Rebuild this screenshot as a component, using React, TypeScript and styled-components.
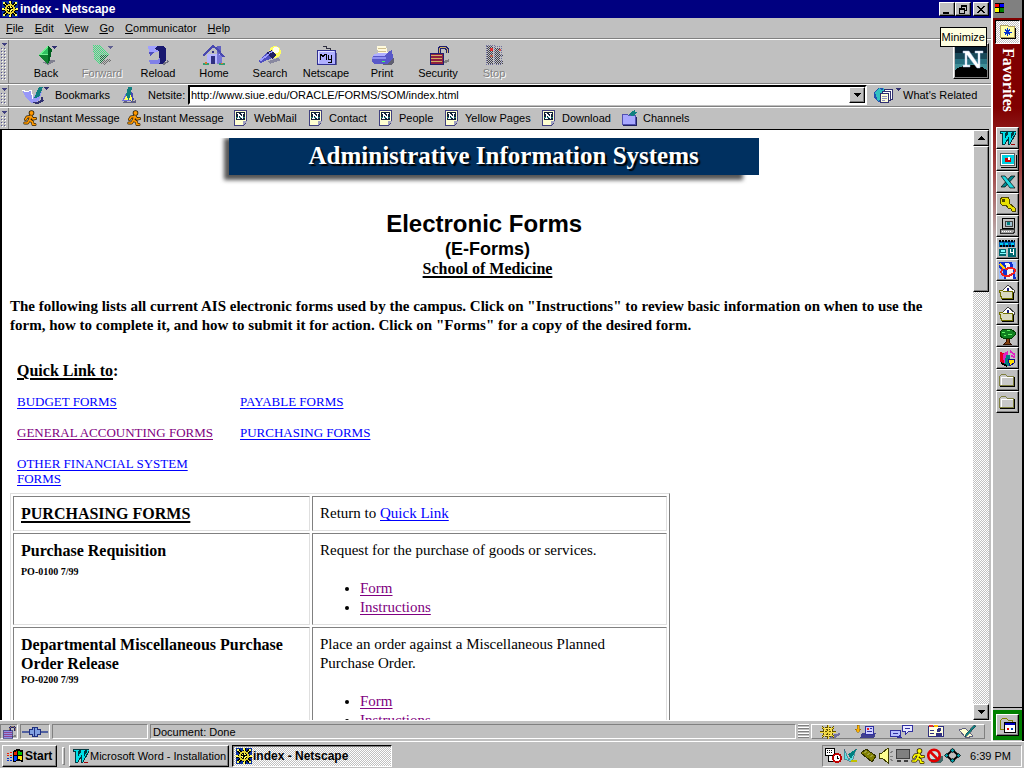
import React from "react";
import styled, { createGlobalStyle, css } from "styled-components";

const GlobalStyle = createGlobalStyle`
  *, *::before, *::after { box-sizing: border-box; }
  body {
    margin: 0;
    background: #c0c0c0;
    color: #000;
    font-family: "Liberation Sans", Arial, sans-serif;
    font-size: 11px;
    line-height: 14px;
  }
  button { font: inherit; color: inherit; margin: 0; padding: 0; border: 0; background: none; }
  svg { display: block; flex: none; shape-rendering: crispEdges; }
`;

const raised = css`
  background-color: #c0c0c0;
  border: 1px solid;
  border-color: #fff #000 #000 #fff;
  box-shadow: inset -1px -1px #808080;
`;
const sunken = css`
  border: 1px solid;
  border-color: #808080 #fff #fff #808080;
`;
const dither = css`
  background: repeating-conic-gradient(#fff 0 25%, #c0c0c0 0 50%) 0 0 / 2px 2px;
`;

const Desktop = styled.div`
  display: flex;
  flex-direction: column;
  height: 100vh;
  overflow: hidden;
`;
const Workspace = styled.div`
  display: flex;
  flex: 1;
  min-height: 0;
`;
const Browser = styled.main`
  position: relative;
  display: flex;
  flex-direction: column;
  flex: 1;
  min-width: 0;
`;

const TitleBar = styled.header`
  display: flex;
  align-items: center;
  height: 18px;
  padding: 0 2px;
  gap: 2px;
  background: #000080;
  color: #fff;
`;
const WindowTitle = styled.h1`
  flex: 1;
  margin: 0;
  font-size: 12px;
  line-height: 16px;
`;
const WindowButton = styled.button<{ $apart?: boolean }>`
  ${raised}
  display: grid;
  place-items: center;
  width: 16px;
  height: 14px;
  margin-left: ${(p) => (p.$apart ? 0 : -2)}px;
`;
const Tooltip = styled.div`
  position: absolute;
  top: 27px;
  right: 4px;
  padding: 2px 1px;
  border: 1px solid #000;
  background: #ffffe1;
  z-index: 2;
`;

const MenuBar = styled.nav`
  display: flex;
  align-items: center;
  height: 20px;
  gap: 11px;
  padding: 0 6px;
`;
const MenuItem = styled.button`
  height: 18px;
`;

const Bar = styled.div<{ $height: number }>`
  display: flex;
  align-items: center;
  height: ${(p) => p.$height}px;
  border-top: 1px solid #808080;
  box-shadow: inset 0 1px #fff;
`;
const Grip = styled.button`
  display: flex;
  flex-direction: column;
  align-items: center;
  align-self: stretch;
  width: 9px;
  padding-top: 3px;
  border-right: 1px solid #808080;
  margin-top: 1px;
  &::after {
    content: "";
    flex: 1;
    width: 6px;
    margin: 2px 0;
    background:
      conic-gradient(from 270deg at 1px 1px, #505090 90deg, transparent 0) 0 0 / 3px 3px,
      conic-gradient(from 270deg at 1px 1px, #fff 90deg, transparent 0) 1px 1px / 3px 3px;
  }
`;
const ToolButtons = styled.div`
  display: flex;
  flex: 1;
  padding-left: 9px;
`;
const ToolButton = styled.button<{ $off?: boolean }>`
  display: flex;
  flex-direction: column;
  align-items: center;
  width: 56px;
  gap: 1px;
  padding-top: 2px;
  color: ${(p) => (p.$off ? "#808080" : "#000")};
  text-shadow: ${(p) => (p.$off ? "1px 1px #fff" : "none")};
`;
const LogoButton = styled.button`
  ${raised}
  display: grid;
  place-items: center;
  width: 36px;
  height: 36px;
  margin-right: 2px;
`;
const BookmarkMenu = styled.button`
  display: flex;
  align-items: center;
  gap: 6px;
  width: 112px;
  padding-left: 13px;
`;
const SiteLabel = styled.label`
  width: 40px;
  margin-left: 12px;
`;
const Combo = styled.div`
  display: flex;
  flex: 1;
  height: 20px;
  border: 2px solid;
  border-color: #000 #fff #fff #000;
  background: #fff;
`;
const Address = styled.input`
  flex: 1;
  min-width: 0;
  border: 0;
  outline: 0;
  padding: 0 1px;
  font: inherit;
`;
const SquareButton = styled.button`
  ${raised}
  display: grid;
  place-items: center;
  width: 16px;
  height: 16px;
  flex: none;
`;
const Related = styled.button`
  display: flex;
  align-items: center;
  width: 124px;
  padding-left: 6px;
  gap: 2px;
`;
const PersonalLinks = styled.div`
  display: flex;
  padding-left: 14px;
`;
const PersonalLink = styled.button<{ $w: number; $tight?: boolean }>`
  display: flex;
  align-items: center;
  width: ${(p) => p.$w}px;
  gap: ${(p) => (p.$tight ? 2 : 6)}px;
  white-space: nowrap;
`;

const Viewport = styled.section`
  display: flex;
  flex: 1;
  min-height: 0;
  border: solid #000;
  border-width: 1px 0 0 2px;
  margin-right: 2px;
`;
const Page = styled.article`
  flex: 1;
  min-width: 0;
  overflow: hidden;
  padding: 8px;
  background: #fff;
  font: 15px/19px "Liberation Serif", "Times New Roman", serif;
`;
const ScrollBar = styled.div`
  ${dither}
  display: flex;
  flex-direction: column;
  width: 16px;
`;
const Thumb = styled.div`
  ${raised}
  height: 146px;
`;
const Spacer = styled.div`
  flex: 1;
`;

const BannerWrap = styled.div`
  display: flex;
  justify-content: center;
  padding-left: 12px;
`;
const Banner = styled.div`
  position: relative;
  width: 530px;
  height: 37px;
  color: #fff;
  padding-left: 80px;
  font-size: 25px;
  line-height: 36px;
  font-weight: bold;
  text-shadow: 2px 2px 1px #000;
  white-space: nowrap;
  isolation: isolate;
  &::before {
    content: "";
    position: absolute;
    inset: 0 16px -5px -5px;
    background: #555;
    filter: blur(2px);
    z-index: -2;
    clip-path: inset(0 -8px -8px -8px);
  }
  &::after {
    content: "";
    position: absolute;
    inset: 0;
    background: #003060;
    z-index: -1;
  }
`;
const Heading = styled.h2`
  margin: 35px 0 0;
  text-align: center;
  font: bold 24px/28px "Liberation Sans", Arial, sans-serif;
`;
const SubHeading = styled.h3`
  margin: 2px 0 0;
  text-align: center;
  font: bold 18px/19px "Liberation Sans", Arial, sans-serif;
`;
const School = styled.p`
  margin: 0;
  text-align: center;
  font-size: 16px;
  font-weight: bold;
  text-decoration: underline 2px;
  text-underline-offset: 2px;
`;
const Intro = styled.p`
  margin: 19px 16px 26px 0;
  font-weight: bold;
`;
const QuickTitle = styled.h4`
  margin: 0 0 14px 7px;
  font-size: 16px;
  span { text-decoration: underline 2px; text-underline-offset: 2px; }
`;
const QuickLinks = styled.div`
  display: grid;
  grid-template-columns: 200px 200px;
  column-gap: 23px;
  row-gap: 16px;
  margin: 0 0 7px 7px;
  font-size: 13px;
  line-height: 15px;
`;
const Link = styled.a<{ $seen?: boolean }>`
  color: ${(p) => (p.$seen ? "#800080" : "#0000ff")};
  text-underline-offset: 2px;
  text-decoration-thickness: 1px;
`;
const FormTable = styled.table`
  width: 660px;
  table-layout: fixed;
  border: 1px solid;
  border-color: #dfdfdf #808080 #808080 #dfdfdf;
  border-spacing: 2px;
  td, th {
    border: 1px solid;
    border-color: #808080 #dfdfdf #dfdfdf #808080;
    padding: 7px;
    vertical-align: top;
    text-align: left;
  }
  th { font-size: 16px; }
`;
const NameCol = styled.col`
  width: 297px;
`;
const SectionName = styled.span`
  text-decoration: underline 2px;
  text-underline-offset: 2px;
`;
const FormCode = styled.div<{ $spaced?: boolean }>`
  margin-top: ${(p) => (p.$spaced ? 5 : 0)}px;
  font-size: 10px;
  line-height: 13px;
`;
const LinkList = styled.ul`
  margin: 19px 0 0;
  padding-left: 40px;
`;

const StatusBar = styled.footer`
  display: flex;
  align-items: stretch;
  height: 21px;
  padding: 3px 6px 2px 0;
  gap: 2px;
  border-top: 1px solid #fff;
`;
const StatusCell = styled.div<{ $w?: number }>`
  ${sunken}
  display: flex;
  align-items: center;
  ${(p) => (p.$w ? `width: ${p.$w}px;` : "flex: 1; padding-left: 2px;")}
`;
const StatusGrip = styled.div`
  width: 11px;
  background: repeating-linear-gradient(#fff 0 1px, #808080 1px 2px, #c0c0c0 2px 3px);
`;
const ComponentBar = styled.div`
  ${raised}
  border-color: #fff #808080 #808080 #fff;
  box-shadow: none;
  display: flex;
  align-items: center;
  justify-content: space-around;
  width: 174px;
`;
const IconButton = styled.button`
  display: grid;
  place-items: center;
`;

const Shortcuts = styled.aside`
  display: flex;
  flex-direction: column;
  width: 33px;
  border-left: 2px solid #fff;
  border-right: 2px solid #000;
`;
const ShortcutHead = styled.div`
  height: 18px;
  padding: 3px 2px;
  background: #808080;
`;
const ShortcutStrip = styled.div`
  display: flex;
  flex-direction: column;
  align-items: center;
  flex: 1;
  padding-top: 2px;
  background: linear-gradient(#800000 0 90px, #a04040 150px, #c0c0c0 230px);
  border-bottom: 1px solid #000;
`;
const FavButton = styled.button`
  ${dither}
  display: grid;
  place-items: center;
  width: 25px;
  height: 24px;
  border: 1px solid;
  border-color: #000 #fff #fff #000;
`;
const FavLabel = styled.div`
  height: 83px;
  padding-top: 4px;
  writing-mode: vertical-rl;
  color: #fff;
  font: bold 16px/18px "Liberation Serif", serif;
`;
const Shortcut = styled.button`
  ${raised}
  display: grid;
  place-items: center;
  width: 23px;
  height: 22px;
`;
const OfficeBox = styled.div`
  display: grid;
  place-items: center;
  height: 30px;
  margin-top: 2px;
  margin-bottom: 1px;
  background: #008000;
`;

const TaskBar = styled.footer`
  display: flex;
  align-items: center;
  height: 27px;
  padding: 1px 2px 0;
  border-top: 1px solid #fff;
  font-size: 11px;
`;
const StartButton = styled.button`
  ${raised}
  display: flex;
  align-items: center;
  gap: 1px;
  width: 55px;
  height: 22px;
  padding-left: 3px;
  font-size: 12px;
  font-weight: bold;
`;
const Divider = styled.div`
  ${raised}
  border-color: #fff #808080 #808080 #fff;
  box-shadow: none;
  width: 3px;
  height: 18px;
  margin: 0 4px 0 5px;
`;
const TaskButton = styled.button<{ $active?: boolean }>`
  ${raised}
  display: flex;
  align-items: center;
  gap: 1px;
  width: 160px;
  height: 22px;
  margin-right: 3px;
  padding-left: 3px;
  white-space: nowrap;
  ${(p) =>
    p.$active &&
    css`
      ${dither}
      border-color: #000 #fff #fff #000;
      box-shadow: inset 1px 1px #808080;
      font-size: 12px;
      font-weight: bold;
    `}
`;
const Tray = styled.div`
  ${sunken}
  display: flex;
  align-items: center;
  gap: 1px;
  width: 200px;
  height: 22px;
  padding: 0 10px 0 2px;
`;
const Clock = styled.time`
  flex: 1;
  text-align: right;
  font-size: 11px;
`;

const Arrow = ({ up }: { up?: boolean }) => (
  <svg width="7" height="4" viewBox="0 0 7 4">
    <path d={up ? "M3 0h1v1h1v1h1v1h1v1H0V3h1V2h1V1h1z" : "M0 0h7v1H6v1H5v1H4v1H3V3H2V2H1V1H0z"} />
  </svg>
);
const GripArrow = () => (
  <svg width="6" height="3" viewBox="0 0 6 3"><path d="M0 0h6L3 3z" fill="#404080" /></svg>
);
const Wheel = ({ size = 16 }: { size?: number }) => (
  <svg width={size} height={size} viewBox="0 0 16 16">
    <rect width="16" height="16" fill="#0830a0" />
    <path d="M8 0v16M0 8h16M2 2l12 12M14 2L2 14" stroke="#000" strokeWidth="3" />
    <circle cx="8" cy="8" r="4" fill="none" stroke="#000" strokeWidth="3" />
    <path d="M8 0v16M0 8h16M2 2l12 12M14 2L2 14" stroke="#ffff60" strokeWidth="1" />
    <circle cx="8" cy="8" r="4" fill="none" stroke="#e0d030" strokeWidth="2" />
    <path d="M7 0h2v2H7zM7 14h2v2H7zM0 7h2v2H0zM14 7h2v2h-2zM1 1h2v2H1zM13 1h2v2h-2zM1 13h2v2H1zM13 13h2v2h-2z" fill="#ffff60" />
    <rect x="7" y="7" width="2" height="2" fill="#000" />
  </svg>
);
const Back = () => (
  <svg width="24" height="20" viewBox="0 0 24 20">
    <path d="M8 17l11-2 3 1-8 4z" fill="#808090" />
    <path d="M4 10l10-10v10z" fill="#70f090" /><path d="M4 10h10v9z" fill="#108030" />
    <path d="M14 0l4 5-2 10-2 4z" fill="#006020" /><path d="M7 9l7-6v6z" fill="#30c060" />
    <path d="M18 1h5l-2.500 3z" fill="#303070" />
  </svg>
);
const Forward = () => (
  <svg width="24" height="20" viewBox="0 0 24 20">
    <defs><pattern id="fw" width="2" height="2" patternUnits="userSpaceOnUse"><path d="M0 0h1v1H0zM1 1h1v1H1z" fill="#c0c0c0" /></pattern></defs>
    <path d="M8 17l11-3 3 1-8 5z" fill="#707070" />
    <path d="M3 0h6l11 10-10 9-6-4z" fill="#40e080" /><path d="M20 10l-10 9V10z" fill="#108040" />
    <rect width="24" height="20" fill="url(#fw)" />
    <path d="M18 1h5l-2.500 3z" fill="#606090" />
  </svg>
);
const Reload = () => (
  <svg width="24" height="20" viewBox="0 0 24 20">
    <path d="M14 17h7l1-3 1 3-5 3z" fill="#707080" />
    <path d="M11 1h6l3 3v11l-4 4H8l5-4V6l-4-2z" fill="#181870" />
    <path d="M2 1h10L8 4l5 2-5 2-5-1z" fill="#a0a0ff" /><path d="M3 7h5L4 11z" fill="#5050c0" />
    <path d="M3 15h8l3-2v4l-2 2H4z" fill="#8080e8" />
  </svg>
);
const Home = () => (
  <svg width="24" height="20" viewBox="0 0 24 20">
    <path d="M15 1h4v8h-4z" fill="#6060c0" /><path d="M5 9h14v9H5z" fill="#b8b8ff" />
    <path d="M15 8l5 3v8h-5z" fill="#7878d8" />
    <path d="M1 11L11 1l4 3 7 8" fill="none" stroke="#4848b0" strokeWidth="2" />
    <path d="M9 11h4v8H9z" fill="#303080" /><circle cx="11" cy="7" r="1.500" fill="#303080" />
    <path d="M1 18h6v2H1zM17 18h6v2h-6z" fill="#30a070" /><path d="M3 17h2v2H3zM19 18h2v1h-2z" fill="#e07030" />
  </svg>
);
const Search = () => (
  <svg width="24" height="20" viewBox="0 0 24 20">
    <path d="M10 16l10-3 3 2-11 4z" fill="#8888a0" />
    <circle cx="17" cy="7" r="6" fill="#ffff60" /><circle cx="18" cy="5" r="3" fill="#fffff0" />
    <path d="M0 16l9-8 5 5-11 5z" fill="#5050c0" /><path d="M8 8l6-3 4 5-4 4z" fill="#202060" />
    <path d="M1 15l9-6 1 1-8 6zM10 8l4-2 1 1-4 2z" fill="#a0a0ff" />
  </svg>
);
const MyNetscape = () => (
  <svg width="24" height="20" viewBox="0 0 24 20">
    <path d="M22 8v12H6" stroke="#606080" fill="none" /><path d="M9 1h3v2h4v2" fill="none" stroke="#303040" />
    <rect x="3" y="5" width="18" height="14" fill="#b0b0ff" stroke="#303090" />
    <path d="M4 6h16v1H5v11H4z" fill="#e0e0ff" />
    <path d="M6 15V9h1l2 3 2-3h1v6M14 10v4h3v-4M17 13v4h-3" fill="none" stroke="#000" />
  </svg>
);
const Printer = () => (
  <svg width="24" height="20" viewBox="0 0 24 20">
    <path d="M18 17l6-4v4l-3 3h-9z" fill="#606070" />
    <path d="M7 1h9l2 8H8z" fill="#fffadc" /><path d="M8 3h8M8 6h8" stroke="#d0c090" />
    <path d="M3 10l5-2h9l5-3 1 8-5 6H4l-2-3z" fill="#5858c8" />
    <path d="M3 10l5-2h9l-2 3H3z" fill="#b0b0ff" /><path d="M2 12h14v2H2z" fill="#9090f0" />
    <path d="M12 16h3v1h-3z" fill="#40ff60" />
  </svg>
);
const Security = ({ small }: { small?: boolean }) => (
  <svg width={small ? 16 : 24} height={small ? 14 : 20} viewBox="0 0 24 20">
    <path d="M17 16l6-2v3l-7 2z" fill="#808080" />
    <path d="M13 8V4l2-2h4l2 2v4" fill="none" stroke="#202070" strokeWidth="3" />
    <path d="M13 8V4l2-2h4l2 2v4" fill="none" stroke="#d0b060" />
    <rect x="4" y="8" width="13" height="11" fill={small ? "#9090e8" : "#902040"} stroke="#202070" />
    <path d="M5 10h11M5 13h11M5 16h11" stroke={small ? "#902060" : "#d0b060"} />
  </svg>
);
const Stop = () => (
  <svg width="24" height="20" viewBox="0 0 24 20">
    <defs><pattern id="shade" width="2" height="2" patternUnits="userSpaceOnUse"><path d="M0 0h1v1H0zM1 1h1v1H1z" fill="#404050" /></pattern></defs>
    <path d="M5 1h6v18H5zM13 3h7v3h-2v3h3v3h-3v3h3v4h-8z" fill="url(#shade)" />
    <rect x="4" y="0" width="8" height="19" fill="none" stroke="#7070a0" strokeDasharray="1 1" />
    <path d="M13 1h6v18h-6" fill="none" stroke="#7070a0" strokeDasharray="1 1" />
    <rect x="8" y="3" width="3" height="3" fill="#e03030" /><rect x="8" y="10" width="3" height="2" fill="#c06050" />
    <rect x="17" y="4" width="2" height="2" fill="#d05050" />
  </svg>
);
const Bookmarks = () => (
  <svg width="27" height="18" viewBox="0 0 27 18">
    <path d="M0 4l5 2 4-2 2 8 5-8 4 2-3 9-8 2-5-5z" fill="#9898f8" />
    <path d="M0 4l5 2 4-2 2 9" fill="none" stroke="#fff" /><path d="M12 12l5-11h4l-4 10z" fill="#108080" />
    <path d="M9 17l9-2 2-5 2 5-6 3z" fill="#303070" /><path d="M22 1h5l-2.500 3z" fill="#303070" />
  </svg>
);
const Quickfile = () => (
  <svg width="15" height="17" viewBox="0 0 15 17">
    <path d="M3 14l6 1 6-2v3H2z" fill="#606080" />
    <path d="M1 14L5 6l4 8z" fill="#7070e0" /><path d="M7 0h4l-2 13H4z" fill="#108080" />
    <path d="M11 4l2 9-3 2-2-3z" fill="#4848b0" /><path d="M8 13l2-7 1 8zM3 13l3-5 1 5z" fill="#ffff60" />
  </svg>
);
const RelatedIcon = () => (
  <svg width="28" height="17" viewBox="0 0 28 17">
    <circle cx="8" cy="8" r="7" fill="#2050b0" /><path d="M2 5l4-4 5 3-4 3 1 4-3 3zM10 1l4 3-3 2z" fill="#30c0c0" />
    <path d="M11.500 2.500h8v10h-8z" fill="#fff" stroke="#303070" /><path d="M9.500 4.500h8v9h-8z" fill="#fff" stroke="#303070" />
    <path d="M7.500 6.500h8v9h-8z" fill="#ffffd8" stroke="#303070" />
    <path d="M9 9h5M9 11h5M9 13h3" stroke="#9090c0" /><path d="M23 1h5l-2.500 3z" fill="#303070" />
  </svg>
);
const Runner = ({ color = "#ff9800" }: { color?: string }) => (
  <svg width="14" height="16" viewBox="0 0 14 16">
    <g shapeRendering="geometricPrecision" strokeLinejoin="round" strokeLinecap="round">
      <path d="M8 6L6.500 10l3 2 .5 2.500h2M6.500 10L4.500 13H1.800M2.500 9.500L4 7l4-.5 2 2.500 2.500-.5" fill="none" stroke="#302000" strokeWidth="3" />
      <circle cx="8.500" cy="3" r="2.800" fill="#302000" />
      <circle cx="8.500" cy="3" r="2" fill={color} />
      <path d="M8 6L6.500 10l3 2 .5 2.500h2M6.500 10L4.500 13H1.800M2.500 9.500L4 7l4-.5 2 2.500 2.500-.5" fill="none" stroke={color} strokeWidth="1.700" />
    </g>
  </svg>
);
const PageIcon = () => (
  <svg width="14" height="16" viewBox="0 0 14 16">
    <path d="M.5.500h12v11l-3 4h-9z" fill="#ffffd0" stroke="#404080" />
    <rect x="2" y="2" width="9" height="8" fill="#102038" /><rect x="2" y="7" width="9" height="1" fill="#208080" />
    <path d="M3 3h2v1h1v1h1v1h1V4H7V3h3v1H9v5H8V8H7V7H6V6H5v2h1v1H3V8h1V4H3z" fill="#fff" />
    <path d="M9 15v-4h4z" fill="#a0a0c0" />
  </svg>
);
const ChannelFolder = () => (
  <svg width="16" height="16" viewBox="0 0 16 16">
    <path d="M1 4h5l1 1h7v9H1z" fill="#a8a8ff" stroke="#5050b0" /><path d="M2 15.500h13V7" fill="none" stroke="#202060" />
    <path d="M7 5l3-3 4-2v2h2l-4 4z" fill="#108080" />
  </svg>
);
const NetscapeLogo = () => (
  <svg width="32" height="32" viewBox="0 0 32 32">
    <rect width="32" height="32" fill="#082030" /><rect y="8" width="32" height="6" fill="#184858" /><rect y="14" width="32" height="5" fill="#287080" /><rect y="19" width="32" height="7" fill="#409098" />
    <path d="M0 25l5-3 7-2h8l7 2 5 3v7H0z" fill="#000" />
    <g shapeRendering="geometricPrecision">
      <path d="M8 6h6l9 13V8h-3V6h8v2h-3v15h-3L12 10v10h3v2H8v-2h2V8H8z" fill="#fff" stroke="#a0b8e0" strokeWidth=".5" />
    </g>
  </svg>
);
const WordIcon = () => (
  <svg width="16" height="16" viewBox="0 0 16 16">
    <path d="M0 1h6v2H5v5l3-5H7V1h5v2h-1v5l3-5h-1V1h3v2l-6 11H8V9l-3 5H2V3H0z" fill="#00e0e8" stroke="#003840" />
    <path d="M11 14h4" stroke="#a00000" />
  </svg>
);
const MonitorIcon = () => (
  <svg width="18" height="16" viewBox="0 0 18 16">
    <path d="M1.500 1.500h14v12h-14z" fill="#fff" stroke="#606060" /><rect x="3" y="3" width="12" height="9" fill="#00d0e0" />
    <path d="M6 6h6v4H6z" fill="#d00000" /><path d="M9 5h2v3H9z" fill="#fff" /><path d="M2 15h15V3" fill="none" stroke="#000" />
  </svg>
);
const ExcelIcon = () => (
  <svg width="16" height="16" viewBox="0 0 16 16">
    <g shapeRendering="geometricPrecision">
      <path d="M11 2h4L5 13H1z" fill="#008890" stroke="#000" strokeWidth=".7" /><path d="M1 2h4l10 12h-5z" fill="#20d8e0" stroke="#000" strokeWidth=".7" />
    </g>
  </svg>
);
const KeyIcon = () => (
  <svg width="17" height="16" viewBox="0 0 17 16">
    <path d="M1 3l3-2h5l2 4-1 2 6 5v3h-3l-1-2-3-1-2-3H3L1 7z" fill="#e8e000" stroke="#504800" />
    <rect x="3" y="3" width="3" height="3" fill="#504800" />
  </svg>
);
const ComputerIcon = () => (
  <svg width="17" height="16" viewBox="0 0 17 16">
    <path d="M3.500.500h12v10h-12z" fill="#c0c0c0" stroke="#000" /><path d="M6 3h7v5H6z" fill="#a0c0d0" stroke="#404040" />
    <path d="M8 4h3v3H8z" fill="#008080" />
    <path d="M1.500 11.500h12l2-1v4l-2 1h-12z" fill="#a0a0a0" stroke="#303030" /><path d="M3 13h9" stroke="#fff" strokeDasharray="1 1" />
  </svg>
);
const FilmIcon = () => (
  <svg width="17" height="17" viewBox="0 0 17 17">
    <rect width="16" height="6" y="1" fill="#0060b0" /><path d="M0 1h16M1 6h14" stroke="#000" strokeDasharray="2 1" strokeWidth="2" />
    <path d="M1 3h3v2H1zM6 3h3v2H6zM12 3h3v2h-3z" fill="#00d0f0" />
    <path d="M0 9h7v7H0zM9 8h8v9H9z" fill="#006870" /><path d="M2 10h4v2H2zM1 13h6v1H1z" fill="#80ffff" />
    <path d="M11 9h1v3h2V9h1v6h-1v-2h-3z" fill="#fff" />
  </svg>
);
const PaintIcon = () => (
  <svg width="17" height="17" viewBox="0 0 17 17">
    <rect width="17" height="17" fill="#1030d0" /><path d="M0 5l4 5 1 7H0zM13 0h4v17z" fill="#a0c0ff" />
    <path d="M6 1h4l2 5 2 2v9H7l1-7z" fill="#f0f0f0" />
    <path d="M4 7c-4 3 0 8 5 7s9-5 6-7-7-1-9 1" fill="none" stroke="#f02020" strokeWidth="2" />
    <path d="M1 2l5 5" stroke="#ffd000" strokeWidth="2" />
  </svg>
);
const OpenFolder = () => (
  <svg width="17" height="16" viewBox="0 0 17 16">
    <path d="M3 7l6-6 7 6-2 3H3z" fill="#fff" stroke="#404040" /><path d="M8 4h2v3H8z" fill="#202080" />
    <path d="M.5 6.500h3l1 1h9v7h-11z" fill="#d8d8c0" stroke="#707000" /><path d="M3 15.500h11V9" fill="none" stroke="#000" />
  </svg>
);
const TreeIcon = () => (
  <svg width="17" height="17" viewBox="0 0 17 17">
    <path d="M5 16l2-2V9h3v5l2 2z" fill="#804010" stroke="#301000" /><path d="M1 4l3-3h8l4 3v3l-3 3H4L1 8z" fill="#108020" stroke="#004000" />
    <path d="M3 4h3v1H3zM8 2h3v1H8zM9 6h4v1H9zM5 7h2v1H5z" fill="#60f060" />
  </svg>
);
const BooksIcon = () => (
  <svg width="17" height="17" viewBox="0 0 17 17">
    <path d="M1 2l4 1v12l-4-3z" fill="#e00020" /><path d="M4 4l5-3v11l-4 3z" fill="#e020c0" /><path d="M7 5h4v11H5z" fill="#008080" />
    <path d="M9 9h6v4l-4 3z" fill="#ffe000" stroke="#101080" /><path d="M11 1l5 4M12 6l4 1" stroke="#e020c0" strokeWidth="2" /><path d="M2 13l6 3" stroke="#000" strokeWidth="2" />
  </svg>
);
const Folder = () => (
  <svg width="17" height="15" viewBox="0 0 17 15">
    <path d="M.5 3.500l2-2h4l2 2h6v9h-14z" fill="#c8c8c8" stroke="#808040" /><path d="M1 13.500h14.500V4" fill="none" stroke="#000" /><path d="M2 12V4h12" fill="none" stroke="#fff" />
  </svg>
);
const FavIcon = () => (
  <svg width="17" height="16" viewBox="0 0 17 16">
    <path d="M1 2l2-1h5l1 1h6v11H1z" fill="#ffffa8" stroke="#b0a060" /><path d="M2 14.500h14V4" fill="none" stroke="#000" />
    <path d="M8.500 4v8M4.500 8h8M6 5.500l5 5M11 5.500l-5 5" stroke="#0030d0" />
  </svg>
);
const OfficeIcon = () => (
  <svg width="18" height="17" viewBox="0 0 18 17">
    <path d="M1.500 3.500l2-2h4l2 2h4v9h-12z" fill="#c0c0c0" stroke="#808000" /><rect x="5.500" y="5.500" width="11" height="10" fill="#fff" stroke="#000" />
    <rect x="6" y="6" width="10" height="2" fill="#0000c0" /><path d="M8 11h2v2H8z" fill="#e00000" /><path d="M12 11h2v2h-2z" fill="#0040c0" />
  </svg>
);
const WindowsFlag = () => (
  <svg width="18" height="16" viewBox="0 0 18 16">
    <path d="M7 3l4-2 6 1v12l-5-1-5 1z" fill="#000" />
    <path d="M8 4l3-1v4H8z" fill="#f02000" /><path d="M12 3l4 1v3h-4z" fill="#00c000" /><path d="M8 8h3v4l-3 1z" fill="#0040ff" /><path d="M12 8h4v4l-4-1z" fill="#ffe000" />
    <path d="M1 5h2M4 4h2M1 7h2M4 7h2" stroke="#f02000" /><path d="M1 10h2M4 9h2M1 12h2M4 12h2" stroke="#0030d0" />
  </svg>
);
const Connect = () => (
  <svg width="28" height="12" viewBox="0 0 28 12">
    <path d="M1 5h26v2H1z" fill="#5060a0" /><path d="M8.500 3.500h3v-2h5v2h3v5h-3v2h-5v-2h-3z" fill="#80a0e0" stroke="#203080" /><path d="M13.500 1v10" stroke="#203080" />
  </svg>
);
const HelmIcon = () => (
  <svg width="22" height="14" viewBox="0 0 22 14">
    <path d="M13 10l8-2v2l-5 3h-5z" fill="#7070a0" />
    <path d="M9 0v14M1 7h16M3 2l12 10M15 2L3 12" stroke="#605000" strokeWidth="2" />
    <circle cx="9" cy="7" r="4" fill="none" stroke="#605000" strokeWidth="3" />
    <circle cx="9" cy="7" r="4" fill="none" stroke="#ffe870" />
    <path d="M9 0v14M1 7h16M3 2l12 10M15 2L3 12" stroke="#f0d840" />
  </svg>
);
const InboxIcon = () => (
  <svg width="22" height="14" viewBox="0 0 22 14">
    <path d="M3 0h2v4h2L4 8 1 4h2z" fill="#ffb000" stroke="#806000" strokeWidth=".5" /><path d="M8 8h14l-2 5H6z" fill="#404090" />
    <path d="M11 1h8v8h-8z" fill="#d0d0ff" stroke="#3030a0" /><path d="M13 3h2v2h-2z" fill="#f02020" /><path d="M16 3h2M13 6h5" stroke="#3030a0" />
  </svg>
);
const NewsIcon = () => (
  <svg width="24" height="14" viewBox="0 0 24 14">
    <path d="M.5 5.500h10v6h-10z" fill="#b8c0ff" stroke="#3030a0" /><path d="M9 10l3 3H6z" fill="#3030a0" />
    <path d="M12.500.500h10v6h-4l-3 3v-3h-3z" fill="#e8e8ff" stroke="#3030a0" /><path d="M15 3h5M3 8h5" stroke="#3030a0" />
  </svg>
);
const CardIcon = () => (
  <svg width="17" height="13" viewBox="0 0 17 13">
    <path d="M.5 1.500h15v10H.5z" fill="#ffffe0" stroke="#303080" /><path d="M1 0h4v2H1z" fill="#e03030" /><path d="M6 0h4v2H6z" fill="#ffc000" />
    <circle cx="11" cy="5" r="2" fill="#303080" /><path d="M8 11V8h6v3zM2 5h4v1H2zM2 8h4v1H2z" fill="#303080" />
  </svg>
);
const ComposeIcon = () => (
  <svg width="19" height="14" viewBox="0 0 19 14">
    <path d="M1 5l6-2 8 8-7 2z" fill="#ffffd0" stroke="#606080" /><path d="M16 0l2 1-9 10-2 1 1-3z" fill="#108080" stroke="#203040" strokeWidth=".5" />
  </svg>
);
const TrayIcons = () => (
  <>
    <svg width="17" height="17" viewBox="0 0 17 17"><path d="M.5 1.500h9v7h-9z" fill="#fff" stroke="#000" /><path d="M2 3h6M2 5h6" stroke="#000" strokeDasharray="1 1" /><path d="M3.500 8.500h11v6h-11z" fill="#fff" stroke="#000" /><circle cx="12" cy="11" r="4" fill="#fff" stroke="#c00000" strokeWidth="2" /><path d="M12 9v2h2" fill="none" stroke="#000" /></svg>
    <svg width="16" height="17" viewBox="0 0 16 17"><path d="M1 2l5 11 7-11-4 13-8-3z" fill="#60e0e0" stroke="#204060" strokeWidth=".5" /><path d="M5 7l3 5 6-10z" fill="#008080" /><path d="M8 13h6v2H8z" fill="#c0c000" /></svg>
    <svg width="17" height="16" viewBox="0 0 17 16"><path d="M1 5l5-4 10 7-4 6z" fill="#808000" stroke="#303000" /><path d="M4 5l3-2M7 7l3-2M10 9l3-2" stroke="#a0a040" /></svg>
    <svg width="16" height="16" viewBox="0 0 16 16"><path d="M1 5h3l6-5v15l-6-5H1z" fill="#ffff90" stroke="#404000" /><path d="M12 5l3-2M12 8h3M12 11l3 2" stroke="#808080" /></svg>
    <svg width="15" height="15" viewBox="0 0 15 15"><path d="M1 1h13v9H1z" fill="#808080" stroke="#404040" /><path d="M2 12h4v2H2zM9 12h4v2H9z" fill="#404040" /></svg>
    <Runner color="#ffff00" />
    <svg width="17" height="16" viewBox="0 0 17 16">
      <path d="M5 8h12v5l-3 2H5z" fill="#406868" />
      <g shapeRendering="geometricPrecision"><path d="M4 4h8v7H4z" fill="#d0e0e0" /><circle cx="8" cy="7.500" r="5.800" fill="none" stroke="#e00000" strokeWidth="2.500" /><path d="M4 3.500l8 8" stroke="#e00000" strokeWidth="2.500" /></g>
    </svg>
    <svg width="17" height="16" viewBox="0 0 17 16"><g shapeRendering="geometricPrecision"><path d="M8.500 2l6 5.500-6 5.500-6-5.500z" fill="none" stroke="#000" strokeWidth="2" /><path d="M8.500.5L11 2.500l-2.500 2L6 2.500zM2.500 5.500L5 7.500l-2.500 2-2-2zM14.500 5.500l2 2-2 2-2.500-2zM8.500 10.500l2.500 2-2.500 2-2.500-2z" fill="#00a0a8" stroke="#000" strokeWidth=".8" /></g></svg>
  </>
);

const menus = ["File", "Edit", "View", "Go", "Communicator", "Help"];
const tools = [
  { label: "Back", icon: <Back /> },
  { label: "Forward", icon: <Forward />, off: true },
  { label: "Reload", icon: <Reload /> },
  { label: "Home", icon: <Home /> },
  { label: "Search", icon: <Search /> },
  { label: "Netscape", icon: <MyNetscape /> },
  { label: "Print", icon: <Printer /> },
  { label: "Security", icon: <Security /> },
  { label: "Stop", icon: <Stop />, off: true },
];
const personal = [
  { label: "Instant Message", icon: <Runner />, w: 104, tight: true },
  { label: "Instant Message", icon: <Runner />, w: 107, tight: true },
  { label: "WebMail", icon: <PageIcon />, w: 75 },
  { label: "Contact", icon: <PageIcon />, w: 70 },
  { label: "People", icon: <PageIcon />, w: 66 },
  { label: "Yellow Pages", icon: <PageIcon />, w: 97 },
  { label: "Download", icon: <PageIcon />, w: 79 },
  { label: "Channels", icon: <ChannelFolder />, w: 80 },
];
const shortcuts = [
  { name: "Word", icon: <WordIcon /> },
  { name: "PowerPoint", icon: <MonitorIcon /> },
  { name: "Excel", icon: <ExcelIcon /> },
  { name: "Access", icon: <KeyIcon /> },
  { name: "Computer", icon: <ComputerIcon /> },
  { name: "Media", icon: <FilmIcon /> },
  { name: "Paint", icon: <PaintIcon /> },
  { name: "Documents", icon: <OpenFolder /> },
  { name: "Projects", icon: <OpenFolder /> },
  { name: "Family tree", icon: <TreeIcon /> },
  { name: "Library", icon: <BooksIcon /> },
  { name: "Folder one", icon: <Folder /> },
  { name: "Folder two", icon: <Folder /> },
];
const quickLinks = [
  { label: "BUDGET FORMS" },
  { label: "PAYABLE FORMS" },
  { label: "GENERAL ACCOUNTING FORMS", seen: true },
  { label: "PURCHASING FORMS" },
  { label: "OTHER FINANCIAL SYSTEM FORMS" },
];
const forms = [
  { name: "Purchase Requisition", code: "PO-0100 7/99", spaced: true, about: "Request for the purchase of goods or services." },
  { name: "Departmental Miscellaneous Purchase Order Release", code: "PO-0200 7/99", about: "Place an order against a Miscellaneous Planned Purchase Order." },
];
const components = [
  { name: "Navigator", icon: <HelmIcon /> },
  { name: "Inbox", icon: <InboxIcon /> },
  { name: "Newsgroups", icon: <NewsIcon /> },
  { name: "Address Book", icon: <CardIcon /> },
  { name: "Composer", icon: <ComposeIcon /> },
];

export default function App() {
  return (
    <Desktop>
      <GlobalStyle />
      <Workspace>
        <Browser>
          <TitleBar>
            <Wheel />
            <WindowTitle>index - Netscape</WindowTitle>
            <WindowButton aria-label="Minimize">
              <svg width="10" height="9" viewBox="0 0 10 9"><path d="M1 7h6v2H1z" /></svg>
            </WindowButton>
            <WindowButton aria-label="Restore">
              <svg width="10" height="9" viewBox="0 0 10 9"><path d="M3 0h6v6H7V5h1V2H4v1H3zM1 3h6v6H1zM2 5v3h4V5z" fillRule="evenodd" /></svg>
            </WindowButton>
            <WindowButton aria-label="Close" $apart>
              <svg width="10" height="9" viewBox="0 0 10 9">
                <path d="M1 1h2v1h1v1h2V2h1V1h2v1H8v1H7v1H6v1h1v1h1v1h1v1H7V7H6V6H4v1H3v1H1V7h1V6h1V5h1V4H3V3H2V2H1z" />
              </svg>
            </WindowButton>
          </TitleBar>
          <Tooltip role="tooltip">Minimize</Tooltip>
          <MenuBar>
            {menus.map((m) => (
              <MenuItem key={m}><u>{m[0]}</u>{m.slice(1)}</MenuItem>
            ))}
          </MenuBar>
          <Bar $height={45}>
            <Grip aria-label="Collapse navigation toolbar"><GripArrow /></Grip>
            <ToolButtons>
              {tools.map((t) => (
                <ToolButton key={t.label} $off={t.off} disabled={t.off}>{t.icon}<span>{t.label}</span></ToolButton>
              ))}
            </ToolButtons>
            <LogoButton aria-label="Netscape home"><NetscapeLogo /></LogoButton>
          </Bar>
          <Bar $height={23}>
            <Grip aria-label="Collapse location toolbar"><GripArrow /></Grip>
            <BookmarkMenu><Bookmarks />Bookmarks</BookmarkMenu>
            <Quickfile />
            <SiteLabel htmlFor="site">Netsite:</SiteLabel>
            <Combo>
              <Address id="site" defaultValue="http://www.siue.edu/ORACLE/FORMS/SOM/index.html" />
              <SquareButton aria-label="Show history"><Arrow /></SquareButton>
            </Combo>
            <Related><RelatedIcon />What's Related</Related>
          </Bar>
          <Bar $height={23}>
            <Grip aria-label="Collapse personal toolbar"><GripArrow /></Grip>
            <PersonalLinks>
              {personal.map((p, i) => (
                <PersonalLink key={i} $w={p.w} $tight={p.tight}>{p.icon}{p.label}</PersonalLink>
              ))}
            </PersonalLinks>
          </Bar>
          <Viewport>
            <Page>
              <BannerWrap><Banner>Administrative Information Systems</Banner></BannerWrap>
              <Heading>Electronic Forms&nbsp;</Heading>
              <SubHeading>(E-Forms)</SubHeading>
              <School>School of Medicine</School>
              <Intro>
                The following lists all current AIS electronic forms used by the campus. Click on "Instructions" to
                review basic information on when to use the form, how to complete it, and how to submit it for action.
                Click on "Forms" for a copy of the desired form.
              </Intro>
              <QuickTitle><span>Quick Link to</span>:</QuickTitle>
              <QuickLinks>
                {quickLinks.map((q) => (
                  <div key={q.label}><Link href="#forms" $seen={q.seen}>{q.label}</Link></div>
                ))}
              </QuickLinks>
              <FormTable>
                <colgroup><NameCol /><col /></colgroup>
                <tbody>
                  <tr>
                    <th><SectionName>PURCHASING FORMS</SectionName></th>
                    <td>Return to <Link href="#quick">Quick Link</Link></td>
                  </tr>
                  {forms.map((f) => (
                    <tr key={f.code}>
                      <th>{f.name}<FormCode $spaced={f.spaced}>{f.code}</FormCode></th>
                      <td>
                        {f.about}
                        <LinkList>
                          <li><Link href="#form" $seen>Form</Link></li>
                          <li><Link href="#instructions" $seen>Instructions</Link></li>
                        </LinkList>
                      </td>
                    </tr>
                  ))}
                </tbody>
              </FormTable>
            </Page>
            <ScrollBar>
              <SquareButton aria-label="Scroll up"><Arrow up /></SquareButton>
              <Thumb />
              <Spacer />
              <SquareButton aria-label="Scroll down"><Arrow /></SquareButton>
            </ScrollBar>
          </Viewport>
          <StatusBar>
            <StatusCell $w={18}><Security small /></StatusCell>
            <StatusCell $w={30}><Connect /></StatusCell>
            <StatusCell $w={96} />
            <StatusCell>Document: Done</StatusCell>
            <StatusGrip />
            <ComponentBar>
              {components.map((c) => (
                <IconButton key={c.name} aria-label={c.name}>{c.icon}</IconButton>
              ))}
            </ComponentBar>
          </StatusBar>
        </Browser>
        <Shortcuts>
          <ShortcutHead>
            <svg width="9" height="10" viewBox="0 0 9 10">
              <rect width="9" height="10" fill="#000" />
              <path d="M0 1h4v3H0z" fill="#f00" /><path d="M5 1h4v3H5z" fill="#00f" /><path d="M0 5h4v4H0z" fill="#ff0" /><path d="M5 5h4v4H5z" fill="#008000" />
            </svg>
          </ShortcutHead>
          <ShortcutStrip>
            <FavButton aria-label="Show favorites"><FavIcon /></FavButton>
            <FavLabel>Favorites</FavLabel>
            {shortcuts.map((s) => (
              <Shortcut key={s.name} aria-label={s.name}>{s.icon}</Shortcut>
            ))}
          </ShortcutStrip>
          <OfficeBox><Shortcut aria-label="Office"><OfficeIcon /></Shortcut></OfficeBox>
        </Shortcuts>
      </Workspace>
      <TaskBar>
        <StartButton><WindowsFlag />Start</StartButton>
        <Divider />
        <TaskButton><WordIcon />Microsoft Word - Installation</TaskButton>
        <TaskButton $active><Wheel />index - Netscape</TaskButton>
        <Spacer />
        <Tray><TrayIcons /><Clock>6:39 PM</Clock></Tray>
      </TaskBar>
    </Desktop>
  );
}
